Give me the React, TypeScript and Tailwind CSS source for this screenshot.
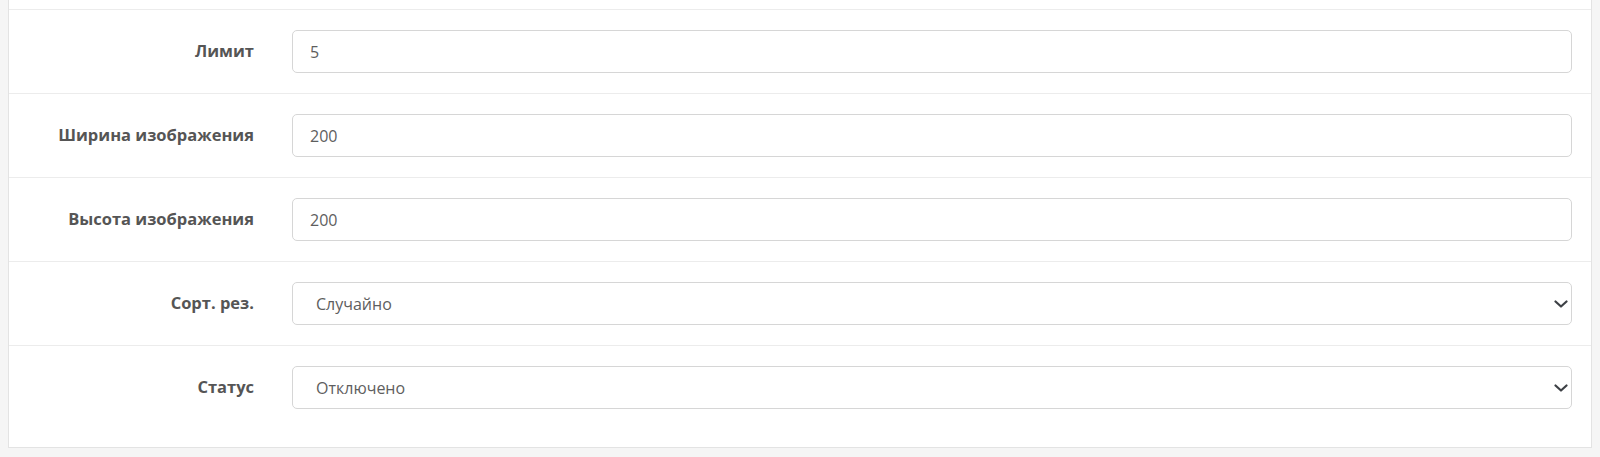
import React from "react";

const font = { fontFamily: '"Open Sans", "Noto Sans", sans-serif' };

function Chevron() {
  return (
    <svg
      className="pointer-events-none absolute right-[4px] top-1/2 -translate-y-1/2"
      width="14"
      height="10"
      viewBox="0 0 14 10"
      fill="none"
    >
      <path d="M1.5 2.5l5.5 5 5.5-5" stroke="#3d4045" strokeWidth="2.2" strokeLinecap="round" strokeLinejoin="round" />
    </svg>
  );
}

function Row({ label, children, last }: { label: string; children: React.ReactNode; last?: boolean }) {
  return (
    <div className={`flex items-center border-t border-[#ececec] pr-[19px] pt-[20px] ${last ? "pb-[38px]" : "pb-[20px]"}`}>
      <label className="w-[245px] shrink-0 text-right text-[16.5px] font-bold text-[#555555]">{label}</label>
      <div className="ml-[38px] flex-1">{children}</div>
    </div>
  );
}

function TextInput({ value }: { value: string }) {
  return (
    <input
      readOnly
      value={value}
      className="block h-[43px] w-full rounded-[5px] border border-[#d6d6d6] bg-white px-[17px] text-[16px] text-[#5e5e5e] outline-none"
      style={font}
    />
  );
}

function Select({ value }: { value: string }) {
  return (
    <div className="relative">
      <select
        defaultValue={value}
        className="block h-[43px] w-full appearance-none rounded-[5px] border border-[#d6d6d6] bg-white pl-[23px] pr-[30px] text-[16px] text-[#5e5e5e] outline-none"
        style={font}
      >
        <option>{value}</option>
      </select>
      <Chevron />
    </div>
  );
}

export default function App() {
  return (
    <div className="min-h-[457px] w-full bg-[#f5f5f5] px-[8px] pb-[9px]" style={font}>
      <div className="border-x border-b border-[#e3e3e3] bg-white">
        <div className="h-[9px]" />
        <Row label="Лимит">
          <TextInput value="5" />
        </Row>
        <Row label="Ширина изображения">
          <TextInput value="200" />
        </Row>
        <Row label="Высота изображения">
          <TextInput value="200" />
        </Row>
        <Row label="Сорт. рез.">
          <Select value="Случайно" />
        </Row>
        <Row label="Статус" last>
          <Select value="Отключено" />
        </Row>
      </div>
    </div>
  );
}
